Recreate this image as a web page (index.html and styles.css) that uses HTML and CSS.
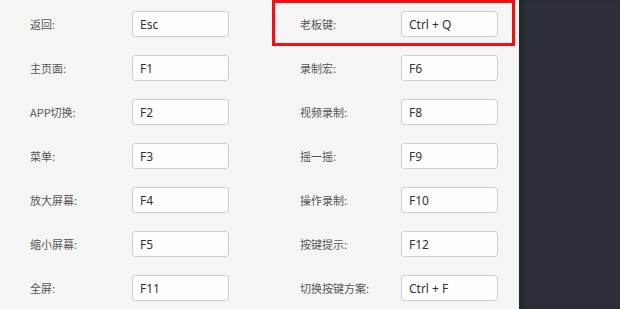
FILE: index.html
```html
<!DOCTYPE html>
<html lang="zh-CN">
<head>
  <meta charset="UTF-8">
  <meta name="viewport" content="width=device-width, initial-scale=1.0">
  <title>快捷键设置</title>
  <link rel="stylesheet" href="styles.css">
</head>
<body>

  <div class="panel">
    <form class="keys">
      <div class="key-row">
        <label for="k-back">返回:</label>
        <input type="text" id="k-back" value="Esc" readonly>
      </div>
      <div class="key-row highlight">
        <label for="k-boss">老板键:</label>
        <input type="text" id="k-boss" value="Ctrl + Q" readonly>
      </div>

      <div class="key-row">
        <label for="k-home">主页面:</label>
        <input type="text" id="k-home" value="F1" readonly>
      </div>
      <div class="key-row">
        <label for="k-macro">录制宏:</label>
        <input type="text" id="k-macro" value="F6" readonly>
      </div>

      <div class="key-row">
        <label for="k-app">APP切换:</label>
        <input type="text" id="k-app" value="F2" readonly>
      </div>
      <div class="key-row">
        <label for="k-video">视频录制:</label>
        <input type="text" id="k-video" value="F8" readonly>
      </div>

      <div class="key-row">
        <label for="k-menu">菜单:</label>
        <input type="text" id="k-menu" value="F3" readonly>
      </div>
      <div class="key-row">
        <label for="k-shake">摇一摇:</label>
        <input type="text" id="k-shake" value="F9" readonly>
      </div>

      <div class="key-row">
        <label for="k-zoomin">放大屏幕:</label>
        <input type="text" id="k-zoomin" value="F4" readonly>
      </div>
      <div class="key-row">
        <label for="k-record">操作录制:</label>
        <input type="text" id="k-record" value="F10" readonly>
      </div>

      <div class="key-row">
        <label for="k-zoomout">缩小屏幕:</label>
        <input type="text" id="k-zoomout" value="F5" readonly>
      </div>
      <div class="key-row">
        <label for="k-tips">按键提示:</label>
        <input type="text" id="k-tips" value="F12" readonly>
      </div>

      <div class="key-row">
        <label for="k-full">全屏:</label>
        <input type="text" id="k-full" value="F11" readonly>
      </div>
      <div class="key-row">
        <label for="k-scheme">切换按键方案:</label>
        <input type="text" id="k-scheme" value="Ctrl + F" readonly>
      </div>
    </form>
  </div>

  <div class="side"></div>

</body>
</html>
```

FILE: styles.css
```css
body {
  margin: 0;
  display: flex;
  height: 309px;
  overflow: hidden;
  font-family: "Noto Sans", "Noto Sans CJK SC", sans-serif;
}

.panel {
  width: 519px;
  background-color: #f5f5f5;
}

.side {
  flex: 1;
  background-color: #2e3039;
  box-shadow: inset 6px 0 8px -4px rgba(0, 0, 0, 0.35);
}

.keys {
  display: grid;
  grid-template-columns: 199px 198px;
  column-gap: 71px;
  row-gap: 18px;
  padding: 11px 0 0 30px;
}

.key-row {
  display: flex;
  align-items: center;
  height: 26px;
}

.key-row label {
  width: 102px;
  font-family: "Noto Sans CJK SC", sans-serif;
  font-size: 11px;
  color: #555;
}

.key-row input {
  width: 97px;
  height: 26px;
  padding: 0 7px;
  box-sizing: border-box;
  border: 1px solid #cdcdda;
  border-radius: 3px;
  background: #fdfdfe;
  font-family: "Noto Sans", sans-serif;
  font-size: 12px;
  color: #333;
  outline: none;
}

.highlight {
  position: relative;
}

.highlight::after {
  content: "";
  position: absolute;
  left: -28px;
  right: -17px;
  top: -11px;
  bottom: -9px;
  border: 3px solid #f01010;
  pointer-events: none;
}
```
